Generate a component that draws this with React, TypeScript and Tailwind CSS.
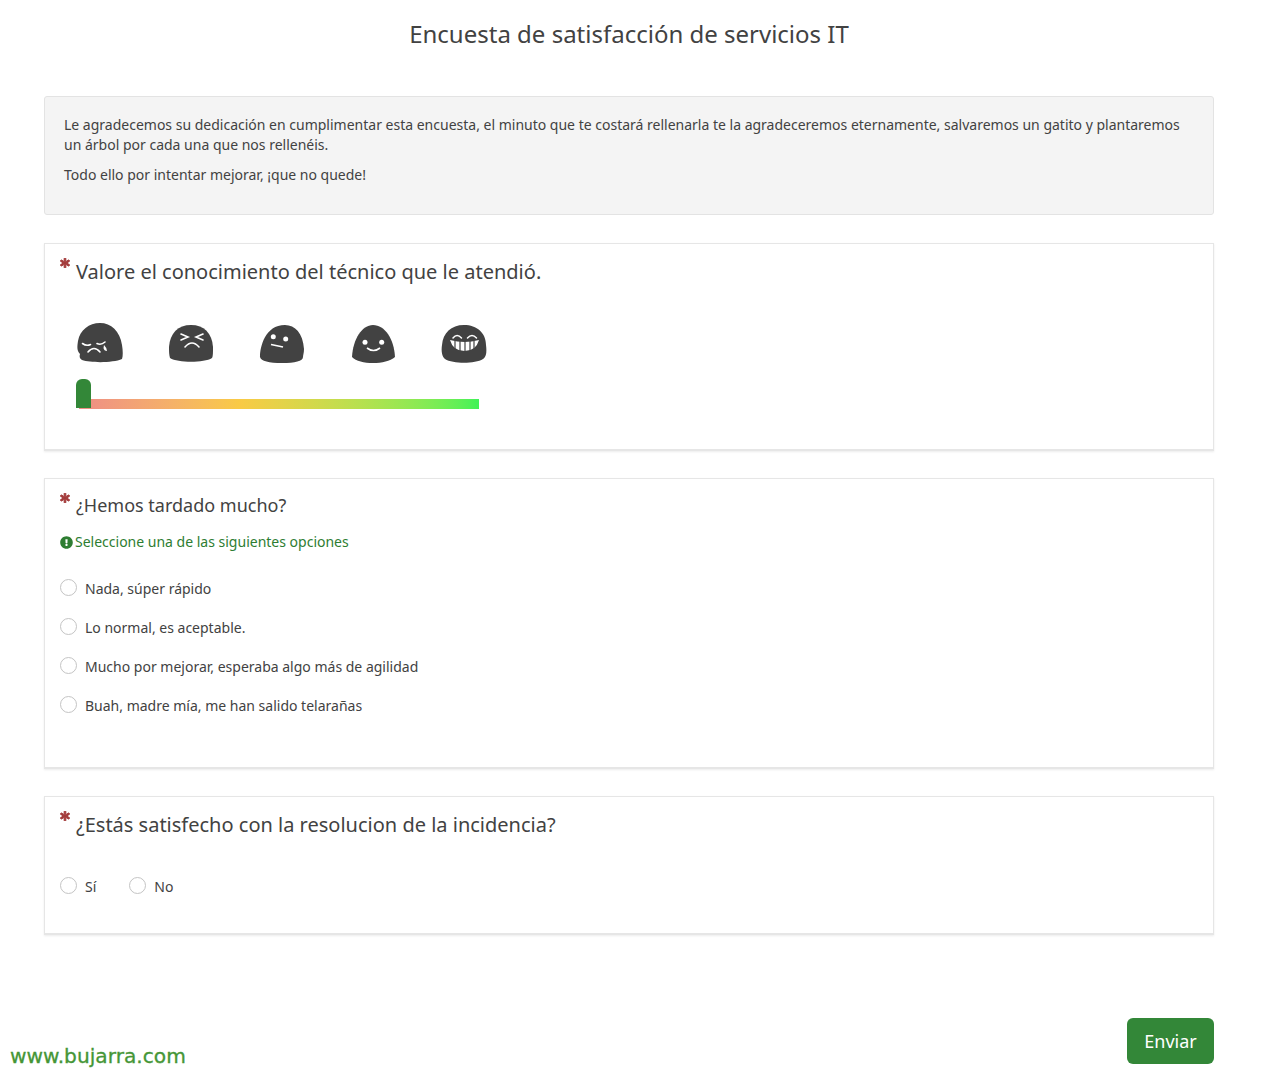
import type { ReactNode } from 'react';
import { FaAsterisk, FaExclamationCircle } from 'react-icons/fa';

const SPEED_OPTIONS = [
  'Nada, súper rápido',
  'Lo normal, es aceptable.',
  'Mucho por mejorar, esperaba algo más de agilidad',
  'Buah, madre mía, me han salido telarañas',
];

function Blob({ d, children }: { d: string; children: ReactNode }) {
  return (
    <svg width="46" height="42" viewBox="0 0 46 42" className="block">
      <path d={d} fill="#424242" />
      {children}
    </svg>
  );
}

function Faces() {
  return (
    <div className="flex gap-[45px] pl-[32px]">
      <Blob d="M23 0C34 0 43 8 45 22C46 28 46 33 45 36C36 40 14 40 5 37C3 36 2 34 3 31C0 28 0 24 1 18C3 7 12 0 23 0Z">
        <g fill="none" stroke="#fff" strokeWidth="1.6" strokeLinecap="round">
          <path d="M5.5 20.5q4 3 8 1" />
          <path d="M20 20.5q4 2 8-1.5" />
          <path d="M11 29q6-7 12 0" />
        </g>
        <path d="M27 22q3 3 3 6q-3 0-3.500-3z" fill="#fff" />
      </Blob>
      <Blob d="M23 2C36 2 44 10 45 24C45 30 45 33 44 35C36 40 10 40 2 35C1 32 1 28 1 24C2 10 10 2 23 2Z">
        <g fill="none" stroke="#fff" strokeWidth="1.6" strokeLinecap="round">
          <path d="M13 11l7 3l-7 3" />
          <path d="M35 11l-7 3l7 3" />
          <path d="M17 24q7-8 14 0" />
        </g>
      </Blob>
      <Blob d="M26 2C36 2 44 10 45 26C45 30 44 32 44 34C44 38 36 40 23 40C10 40 2 38 1 34C1 24 6 2 26 2Z">
        <circle cx="14.3" cy="13.7" r="2.5" fill="#fff" />
        <circle cx="26.7" cy="16" r="2.5" fill="#fff" />
        <path d="M12 21.5L24 24" stroke="#fff" strokeWidth="1.6" fill="none" />
      </Blob>
      <Blob d="M23 2C35 2 44 16 45 34C40 38 32 40 23 40C14 40 6 38 2 34C3 16 12 2 23 2Z">
        <circle cx="15" cy="19.3" r="2.5" fill="#fff" />
        <circle cx="31.7" cy="19.3" r="2.5" fill="#fff" />
        <path d="M17 25q6.5 5 13 0" stroke="#fff" strokeWidth="1.6" fill="none" />
      </Blob>
      <Blob d="M23 2C36 2 45 10 45 22C46 30 45 34 42 36C34 41 12 41 4 36C1 34 0 28 1 22C2 10 10 2 23 2Z">
        <g fill="none" stroke="#fff" strokeWidth="1.5" strokeLinecap="round">
          <path d="M12 15q4-5 8.500 0" />
          <path d="M26.500 15q4.500-5 9 0" />
        </g>
        <path d="M9 17q14.500 4 29 0q-3 11-14.500 11T9 17z" fill="#fff" />
        <g stroke="#424242" strokeWidth="1.2">
          <path d="M14 18v9" />
          <path d="M19 18v10" />
          <path d="M24 18v10" />
          <path d="M29 18v10" />
          <path d="M33 18v8" />
        </g>
      </Blob>
    </div>
  );
}

function Required() {
  return (
    <span className="absolute left-[15px] top-[14px] text-[#a33a3a]">
      <FaAsterisk size={10} stroke="currentColor" strokeWidth={50} />
    </span>
  );
}

function Radio({ label }: { label: string }) {
  return (
    <label className="flex items-start gap-[8px] text-[14px] leading-[20px] text-[#424242]">
      <span className="w-[17px] h-[17px] rounded-full border border-[#c4c4c4] bg-white" />
      <span>{label}</span>
    </label>
  );
}

export default function App() {
  return (
    <div className="relative h-[1077px] bg-white font-['Noto_Sans',sans-serif] text-[#424242] pl-[44px]">
      <h1 className="w-[1170px] text-[24px] leading-[32px] text-center pt-[18px] box-content">
        Encuesta de satisfacción de servicios IT
      </h1>

      {/* Intro */}
      <div className="mt-[46px] w-[1170px] h-[119px] bg-[#f4f4f4] border border-[#e3e3e3] rounded-[3px] px-[19px] pt-[18px] text-[14px] leading-[20px]">
        <p>
          Le agradecemos su dedicación en cumplimentar esta encuesta, el minuto que te costará rellenarla te la agradeceremos eternamente, salvaremos un gatito y plantaremos un árbol por cada una que nos rellenéis.
        </p>
        <p className="mt-[10px]">Todo ello por intentar mejorar, ¡que no quede!</p>
      </div>

      {/* Rating */}
      <div className="relative mt-[28px] w-[1170px] h-[208px] border border-[#e6e6e6] border-b-2 shadow-[0_1px_2px_rgba(0,0,0,0.08)] pt-[13px]">
        <Required />
        <h2 className="pl-[31px] text-[20px] leading-[30px]">Valore el conocimiento del técnico que le atendió.</h2>
        <div className="mt-[36px]">
          <Faces />
        </div>
        <div className="relative ml-[34px] mt-[34px] w-[400px] h-[10px] bg-gradient-to-r from-[#ee8d85] via-[#f9ca45] via-40% to-[#3ff258]">
          <div className="absolute -left-[3px] -top-[20px] w-[15px] h-[29px] bg-[#338738] rounded-t-[6px]" />
        </div>
      </div>

      {/* Speed */}
      <div className="relative mt-[27px] w-[1170px] h-[291px] border border-[#e6e6e6] border-b-2 shadow-[0_1px_2px_rgba(0,0,0,0.08)] pt-[12px]">
        <Required />
        <h2 className="pl-[31px] text-[18px] leading-[28px]">¿Hemos tardado mucho?</h2>
        <div className="mt-[13px] pl-[15px] flex items-center gap-[2px] text-[14px] leading-[20px] text-[#2e7d32]">
          <FaExclamationCircle size={13} />
          <span>Seleccione una de las siguientes opciones</span>
        </div>
        <div className="mt-[27px] pl-[15px] flex flex-col gap-[19px]">
          {SPEED_OPTIONS.map((o) => (
            <Radio key={o} label={o} />
          ))}
        </div>
      </div>

      {/* Satisfaction */}
      <div className="relative mt-[27px] w-[1170px] h-[139px] border border-[#e6e6e6] border-b-2 shadow-[0_1px_2px_rgba(0,0,0,0.08)] pt-[13px]">
        <Required />
        <h2 className="pl-[31px] text-[20px] leading-[30px]">¿Estás satisfecho con la resolucion de la incidencia?</h2>
        <div className="mt-[37px] pl-[15px] flex gap-[33px]">
          <Radio label="Sí" />
          <Radio label="No" />
        </div>
      </div>

      <div className="mt-[83px] w-[1170px] flex justify-end">
        <button className="w-[87px] h-[46px] rounded-[6px] bg-[#338738] text-white text-[18px]">Enviar</button>
      </div>

      <span className="absolute left-[10px] top-[1043px] text-[20.2px] leading-[26px] text-[#459636] [-webkit-text-stroke:0.3px_#459636] font-['DejaVu_Sans',sans-serif]">
        www.bujarra.com
      </span>
    </div>
  );
}
